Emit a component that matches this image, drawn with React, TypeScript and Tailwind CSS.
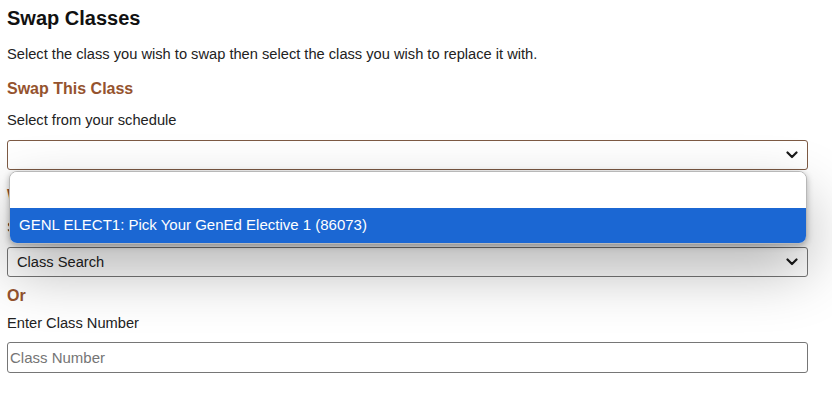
import React from "react";

function Chevron() {
  return (
    <svg width="12" height="8" viewBox="0 0 12 8" className="absolute right-[9px] top-1/2 -translate-y-1/2">
      <path d="M1.5 1.5 L6 6 L10.5 1.5" fill="none" stroke="#1a1a1a" strokeWidth="2.2" strokeLinecap="round" strokeLinejoin="round" />
    </svg>
  );
}

export default function App() {
  return (
    <div className="w-[832px] h-[396px] overflow-hidden bg-white pl-[7px] pr-[24px] text-[14.67px] text-[#222] font-['Liberation_Sans',Arial,sans-serif]">
      <h1 className="mt-[6px] text-[20px] leading-[24px] font-bold text-[#111]">Swap Classes</h1>
      <p className="mt-[14px] leading-[20px]">Select the class you wish to swap then select the class you wish to replace it with.</p>
      <h2 className="mt-[15px] text-[16px] leading-[20px] font-bold text-[#95532e]">Swap This Class</h2>
      <div className="mt-[11px] leading-[20px]">Select from your schedule</div>
      <div className="relative mt-[10px]">
        <div className="relative h-[30px] rounded-[3px] border border-[#7d5a44] bg-white">
          <Chevron />
        </div>
        <div className="absolute left-[2px] right-[1px] top-[31px] z-10 overflow-hidden rounded-[8px] border border-[#b8b8b8] bg-white shadow-[0_26px_60px_rgba(0,0,0,0.3),0_2px_6px_rgba(0,0,0,0.28)]">
          <div className="h-[36px] bg-white" />
          <div className="flex h-[35px] items-center bg-[#1b67d3] pl-[9px] text-[15px] text-white">
            GENL ELECT1: Pick Your GenEd Elective 1 (86073)
          </div>
        </div>
      </div>
      <h2 className="mt-[16px] text-[16px] leading-[20px] font-bold text-[#95532e]">With This Class</h2>
      <div className="mt-[11px] leading-[20px]">Select from class search</div>
      <div className="relative mt-[10px] flex h-[30px] items-center rounded-[3px] border border-[#767676] bg-white pl-[9px]">
        <span>Class Search</span>
        <Chevron />
      </div>
      <div className="mt-[9px] text-[16px] leading-[20px] font-bold text-[#95532e]">Or</div>
      <div className="mt-[7px] leading-[20px]">Enter Class Number</div>
      <input
        className="mt-[9px] block h-[31px] w-full rounded-[3px] border border-[#767676] bg-white px-[2px] text-[15px] text-[#222] placeholder:text-[#757575] outline-none"
        placeholder="Class Number"
      />
    </div>
  );
}
